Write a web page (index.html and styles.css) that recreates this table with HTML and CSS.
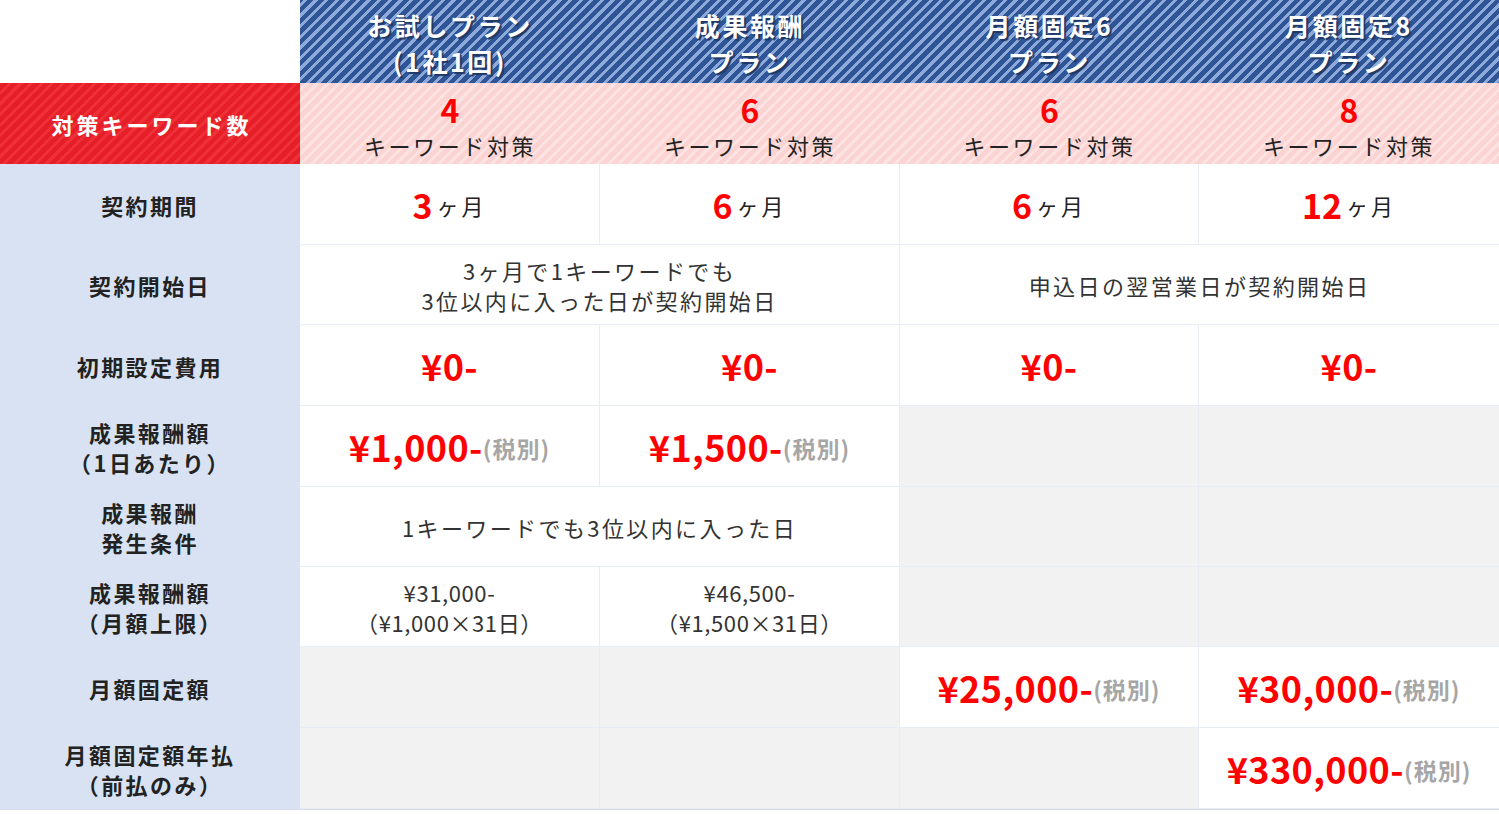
FILE: index.html
```html
<!DOCTYPE html>
<html lang="ja">
<head>
<meta charset="utf-8">
<link rel="stylesheet" href="styles.css">
</head>
<body>
<div class="table">
  <div class="corner"></div>
  <div class="head"><span class="hl">お試しプラン</span><span class="hl">(1社1回)</span></div>
  <div class="head"><span class="hl">成果報酬</span><span class="hl">プラン</span></div>
  <div class="head"><span class="hl">月額固定6</span><span class="hl">プラン</span></div>
  <div class="head"><span class="hl">月額固定8</span><span class="hl">プラン</span></div>

  <div class="kwlabel">対策キーワード数</div>
  <div class="kw"><span class="kwnum">4</span><span class="kwtxt">キーワード対策</span></div>
  <div class="kw"><span class="kwnum">6</span><span class="kwtxt">キーワード対策</span></div>
  <div class="kw"><span class="kwnum">6</span><span class="kwtxt">キーワード対策</span></div>
  <div class="kw"><span class="kwnum">8</span><span class="kwtxt">キーワード対策</span></div>

  <div class="label">契約期間</div>
  <div class="cell"><span class="num">3</span><span class="unit">ヶ月</span></div>
  <div class="cell"><span class="num">6</span><span class="unit">ヶ月</span></div>
  <div class="cell"><span class="num">6</span><span class="unit">ヶ月</span></div>
  <div class="cell last"><span class="num">12</span><span class="unit">ヶ月</span></div>

  <div class="label">契約開始日</div>
  <div class="cell span2 txt">3ヶ月で1キーワードでも<br>3位以内に入った日が契約開始日</div>
  <div class="cell span2 last txt">申込日の翌営業日が契約開始日</div>

  <div class="label">初期設定費用</div>
  <div class="cell"><span class="price">¥0-</span></div>
  <div class="cell"><span class="price">¥0-</span></div>
  <div class="cell"><span class="price">¥0-</span></div>
  <div class="cell last"><span class="price">¥0-</span></div>

  <div class="label">成果報酬額<br>（1日あたり）</div>
  <div class="cell"><span class="price">¥1,000-</span><span class="tax">(税別)</span></div>
  <div class="cell"><span class="price">¥1,500-</span><span class="tax">(税別)</span></div>
  <div class="cell grey"></div>
  <div class="cell grey last"></div>

  <div class="label">成果報酬<br>発生条件</div>
  <div class="cell span2 txt">1キーワードでも3位以内に入った日</div>
  <div class="cell grey"></div>
  <div class="cell grey last"></div>

  <div class="label">成果報酬額<br>（月額上限）</div>
  <div class="cell txt tight">¥31,000-<br>（¥1,000×31日）</div>
  <div class="cell txt tight">¥46,500-<br>（¥1,500×31日）</div>
  <div class="cell grey"></div>
  <div class="cell grey last"></div>

  <div class="label">月額固定額</div>
  <div class="cell grey"></div>
  <div class="cell grey"></div>
  <div class="cell"><span class="price">¥25,000-</span><span class="tax">(税別)</span></div>
  <div class="cell last"><span class="price">¥30,000-</span><span class="tax">(税別)</span></div>

  <div class="label">月額固定額年払<br>（前払のみ）</div>
  <div class="cell grey"></div>
  <div class="cell grey"></div>
  <div class="cell grey"></div>
  <div class="cell last"><span class="price">¥330,000-</span><span class="tax">(税別)</span></div>
</div>
</body>
</html>
```

FILE: styles.css
```css
html, body {
  margin: 0;
  padding: 0;
  background: #ffffff;
}
body {
  font-family: "Noto Sans CJK JP", "Noto Sans", sans-serif;
  color: #222222;
}
.table {
  display: grid;
  grid-template-columns: 300px 300px 300px 299px 300px;
  grid-template-rows: 83px 81px 81px 80px 81px 81px 80px 80px 81px 81px;
  width: 1499px;
  border-bottom: 1px solid #d5dcea;
}
.table > div {
  display: flex;
  align-items: center;
  justify-content: center;
  text-align: center;
  box-sizing: border-box;
}
.corner {
  background: #ffffff;
}
.head {
  background: repeating-linear-gradient(135deg, #2f5597 0px, #2f5597 4.5px, #8eaadb 4.5px, #8eaadb 7.5px);
  background-attachment: fixed;
  flex-direction: column;
  color: #ffffff;
  font-weight: 700;
  font-size: 25px;
  letter-spacing: 2.6px;
  padding-top: 3px;
  text-shadow: 2px 2px 1px #1f3864;
}
.hl {
  display: block;
  line-height: 36px;
}
.kwlabel {
  background: repeating-linear-gradient(135deg, #e61e27 0px, #e61e27 4.5px, #ef3039 4.5px, #ef3039 7.5px);
  background-attachment: fixed;
  color: #ffffff;
  font-weight: 700;
  font-size: 22px;
  letter-spacing: 3px;
  padding-left: 3px;
}
.kw {
  background: repeating-linear-gradient(135deg, #fcd3d3 0px, #fcd3d3 4.5px, #fde2e2 4.5px, #fde2e2 7.5px);
  background-attachment: fixed;
  flex-direction: column;
  padding-top: 6px;
}
.kwnum {
  color: #ff0000;
  font-weight: 700;
  font-size: 32px;
  line-height: 36px;
}
.kwtxt {
  font-size: 22px;
  letter-spacing: 2.6px;
  line-height: 36px;
  color: #222222;
}
.label {
  background: #d9e2f3;
  font-weight: 700;
  font-size: 22px;
  line-height: 30px;
  letter-spacing: 2.4px;
  color: #222222;
}
.cell {
  background: #ffffff;
  border-right: 1px solid #e8ecf5;
  border-bottom: 1px solid #e8ecf5;
}
.cell.last {
  border-right: none;
}
.cell.grey {
  background: #f2f2f2;
}
.span2 {
  grid-column: span 2;
}
.txt {
  font-size: 22px;
  line-height: 30px;
  letter-spacing: 2.4px;
  color: #333333;
}
.txt.tight {
  letter-spacing: 0.6px;
}
.num {
  color: #ff0000;
  font-weight: 700;
  font-size: 34px;
  margin-right: 4px;
}
.unit {
  font-size: 22px;
  letter-spacing: 3px;
  color: #222222;
  padding-top: 2px;
}
.price {
  color: #ff0000;
  font-weight: 700;
  font-size: 36px;
  letter-spacing: 0.4px;
}
.tax {
  color: #a6a6a6;
  font-weight: 700;
  font-size: 23px;
  letter-spacing: 1px;
  padding-top: 4px;
}
```
